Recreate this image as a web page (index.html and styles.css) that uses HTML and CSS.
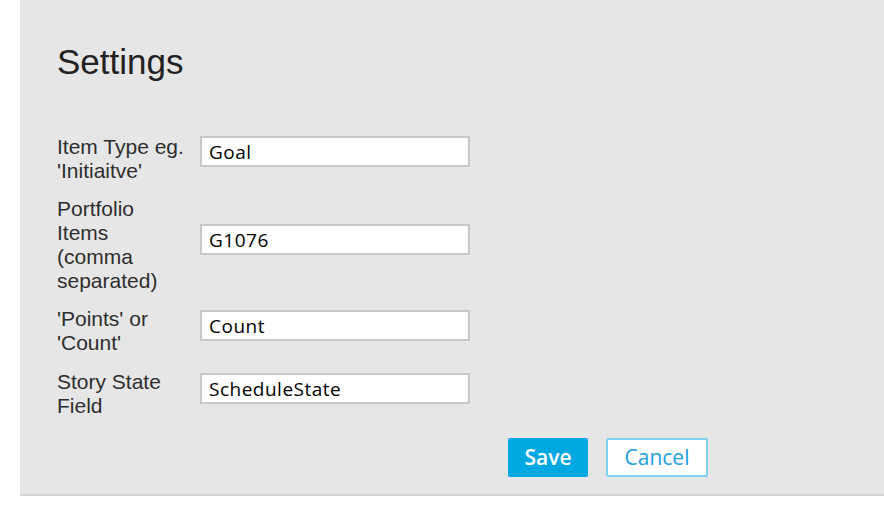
FILE: index.html
```html
<!DOCTYPE html>
<html>
<head>
<meta charset="utf-8">
<link rel="stylesheet" href="styles.css">
</head>
<body>
<div class="panel">
  <h1 class="title">Settings</h1>
  <form class="form">
    <div class="row">
      <label class="label">Item Type eg. 'Initiaitve'</label>
      <input class="field" type="text" value="Goal">
    </div>
    <div class="row">
      <label class="label">Portfolio Items (comma separated)</label>
      <input class="field field--mid" type="text" value="G1076">
    </div>
    <div class="row">
      <label class="label">'Points' or 'Count'</label>
      <input class="field field--low" type="text" value="Count">
    </div>
    <div class="row row--last">
      <label class="label">Story State Field</label>
      <input class="field field--low" type="text" value="ScheduleState">
    </div>
    <div class="actions">
      <button class="btn btn--primary" type="button">Save</button>
      <button class="btn btn--secondary" type="button">Cancel</button>
    </div>
  </form>
</div>
</body>
</html>
```
FILE: styles.css
```css
html, body {
  margin: 0;
  padding: 0;
  background: #ffffff;
  overflow: hidden;
}

.panel {
  margin-left: 20px;
  height: 496px;
  box-sizing: border-box;
  background: #e6e6e6;
  border-bottom: 2px solid #d3d3d3;
  padding: 42px 0 0 37px;
}

.title {
  margin: 0;
  font-family: "Liberation Sans", Arial, sans-serif;
  font-weight: normal;
  font-size: 35px;
  line-height: 40px;
  color: #222222;
}

.form {
  margin-top: 53px;
  display: flex;
  flex-direction: column;
  gap: 14px;
}

.row {
  display: flex;
  align-items: flex-start;
  gap: 12px;
}

.row--last {
  margin-top: 1px;
}

.label {
  width: 131px;
  font-family: "Liberation Sans", Arial, sans-serif;
  font-size: 21px;
  line-height: 24px;
  color: #2e2e2e;
}

.field {
  box-sizing: border-box;
  width: 270px;
  height: 31px;
  margin: 1px 0 0 0;
  padding: 0 0 0 7px;
  border: 2px solid #c8c8c8;
  background: #ffffff;
  font-family: "Open Sans", sans-serif;
  font-size: 19px;
  letter-spacing: 0.5px;
  color: #000000;
  outline: none;
}

.field--mid {
  margin-top: 27px;
}

.field--low {
  margin-top: 3px;
}

.actions {
  display: flex;
  gap: 18px;
  margin: 6px 0 0 451px;
}

.btn {
  box-sizing: border-box;
  height: 39px;
  padding: 0;
  border-radius: 2px;
  font-family: "Open Sans", sans-serif;
  font-size: 21px;
  line-height: 1;
  cursor: pointer;
}

.btn--primary {
  width: 80px;
  background: #00a8e1;
  border: none;
  color: #ffffff;
  font-weight: 600;
}

.btn--secondary {
  width: 102px;
  background: #ffffff;
  border: 2px solid #80d2f0;
  color: #1a9fdf;
  font-weight: normal;
}
```
